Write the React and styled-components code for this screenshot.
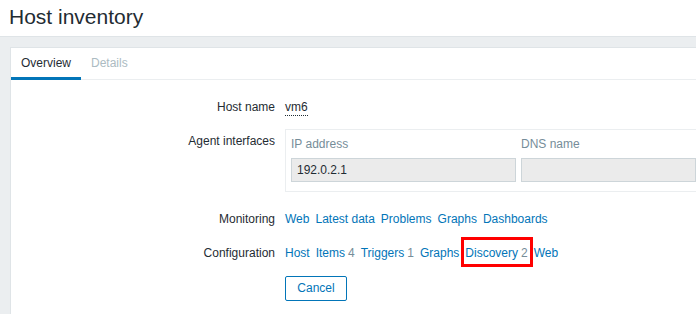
import React from "react";
import styled, { createGlobalStyle } from "styled-components";

const GlobalStyle = createGlobalStyle`
  html, body {
    margin: 0;
    padding: 0;
    overflow: hidden;
    background: #ebeef0;
    font-family: "Liberation Sans", Arial, sans-serif;
    font-size: 12px;
    color: #1f2c33;
  }
  * { box-sizing: border-box; }
`;

const monitoring = ["Web", "Latest data", "Problems", "Graphs", "Dashboards"];
const configuration = [
  { name: "Host" },
  { name: "Items", count: 4 },
  { name: "Triggers", count: 1 },
  { name: "Graphs" },
  { name: "Discovery", count: 2, marked: true },
  { name: "Web" },
];

export default function App() {
  return (
    <Page>
      <GlobalStyle />
      <Header>
        <Title>Host inventory</Title>
      </Header>
      <Content>
        <Panel>
          <TabNav>
            <Tab active>Overview</Tab>
            <Tab>Details</Tab>
          </TabNav>
          <Form>
            <Label>Host name</Label>
            <Value>
              <HostLink>vm6</HostLink>
            </Value>

            <Label>Agent interfaces</Label>
            <Value>
              <Interfaces>
                <ColHead>IP address</ColHead>
                <ColHead>DNS name</ColHead>
                <ColHead />
                <Field>192.0.2.1</Field>
                <Field />
                <Field />
              </Interfaces>
            </Value>

            <Label>Monitoring</Label>
            <Links>
              {monitoring.map((m) => (
                <Link key={m}>{m}</Link>
              ))}
            </Links>

            <Label>Configuration</Label>
            <Links>
              {configuration.map((c) => (
                <Item key={c.name} marked={c.marked}>
                  <Link>{c.name}</Link>
                  {c.count !== undefined && <Count>{c.count}</Count>}
                </Item>
              ))}
            </Links>

            <span />
            <Value>
              <Button>Cancel</Button>
            </Value>
          </Form>
        </Panel>
      </Content>
    </Page>
  );
}

const Page = styled.div`
  width: 696px;
  height: 314px;
  display: flex;
  flex-direction: column;
  overflow: hidden;
`;

const Header = styled.header`
  height: 37px;
  padding: 4px 0 0 9px;
  background: #fff;
  border-bottom: 1px solid #dfe4e7;
`;

const Title = styled.h1`
  margin: 0;
  font-size: 21px;
  font-weight: normal;
  line-height: 25px;
  color: #1f2c33;
`;

const Content = styled.main`
  flex: 1;
  min-height: 0;
  padding: 10px 0 0 10px;
`;

const Panel = styled.section`
  height: 100%;
  overflow: hidden;
  background: #fff;
  border: 1px solid #dfe4e7;
  border-right: none;
  border-bottom: none;
`;

const TabNav = styled.nav`
  display: flex;
  height: 32px;
  border-bottom: 1px solid #ebeef0;
`;

const Tab = styled.div`
  height: 32px;
  padding: 0 10px;
  line-height: 31px;
  border-bottom: 3px solid ${({ active }) => (active ? "#0275b8" : "transparent")};
  color: ${({ active }) => (active ? "#1f2c33" : "#acbbc2")};
`;

const Form = styled.div`
  display: grid;
  grid-template-columns: 264px 1fr;
  column-gap: 10px;
  row-gap: 10px;
  padding-top: 15px;
`;

const Label = styled.div`
  text-align: right;
  line-height: 24px;
  color: #1f2c33;
`;

const Value = styled.div`
  line-height: 24px;
  min-width: 0;
`;

const HostLink = styled.span`
  color: #1f2c33;
  border-bottom: 1px dotted #1f2c33;
  padding-bottom: 1px;
`;

const Interfaces = styled.div`
  display: grid;
  grid-template-columns: 225px 175px 200px;
  column-gap: 5px;
  row-gap: 5px;
  width: 620px;
  padding: 5px 5px 9px;
  margin-bottom: 5px;
  border: 1px solid #ebeef0;
`;

const ColHead = styled.div`
  line-height: 18px;
  color: #768d99;
`;

const Field = styled.div`
  height: 24px;
  padding: 0 5px;
  line-height: 22px;
  background: #ebebeb;
  border: 1px solid #cdd5d9;
  color: #1f2c33;
`;

const Links = styled.div`
  display: flex;
  align-items: center;
  gap: 6px;
  line-height: 24px;
  white-space: nowrap;
`;

const Item = styled.span`
  position: relative;
  display: inline-flex;
  gap: 3px;
  ${({ marked }) =>
    marked &&
    `
    &::after {
      content: "";
      position: absolute;
      top: -4px;
      bottom: -2px;
      left: -4px;
      right: -5px;
      border: 3px solid #ff0000;
      pointer-events: none;
    }
  `}
`;

const Link = styled.a`
  color: #0275b8;
  text-decoration: none;
  cursor: pointer;
`;

const Count = styled.span`
  color: #768d99;
`;

const Button = styled.button`
  height: 25px;
  padding: 0 10px;
  margin-top: 1px;
  background: #fff;
  border: 1px solid #0275b8;
  border-radius: 2px;
  color: #0275b8;
  font-family: inherit;
  font-size: 12px;
  line-height: 23px;
  width: 62px;
`;
